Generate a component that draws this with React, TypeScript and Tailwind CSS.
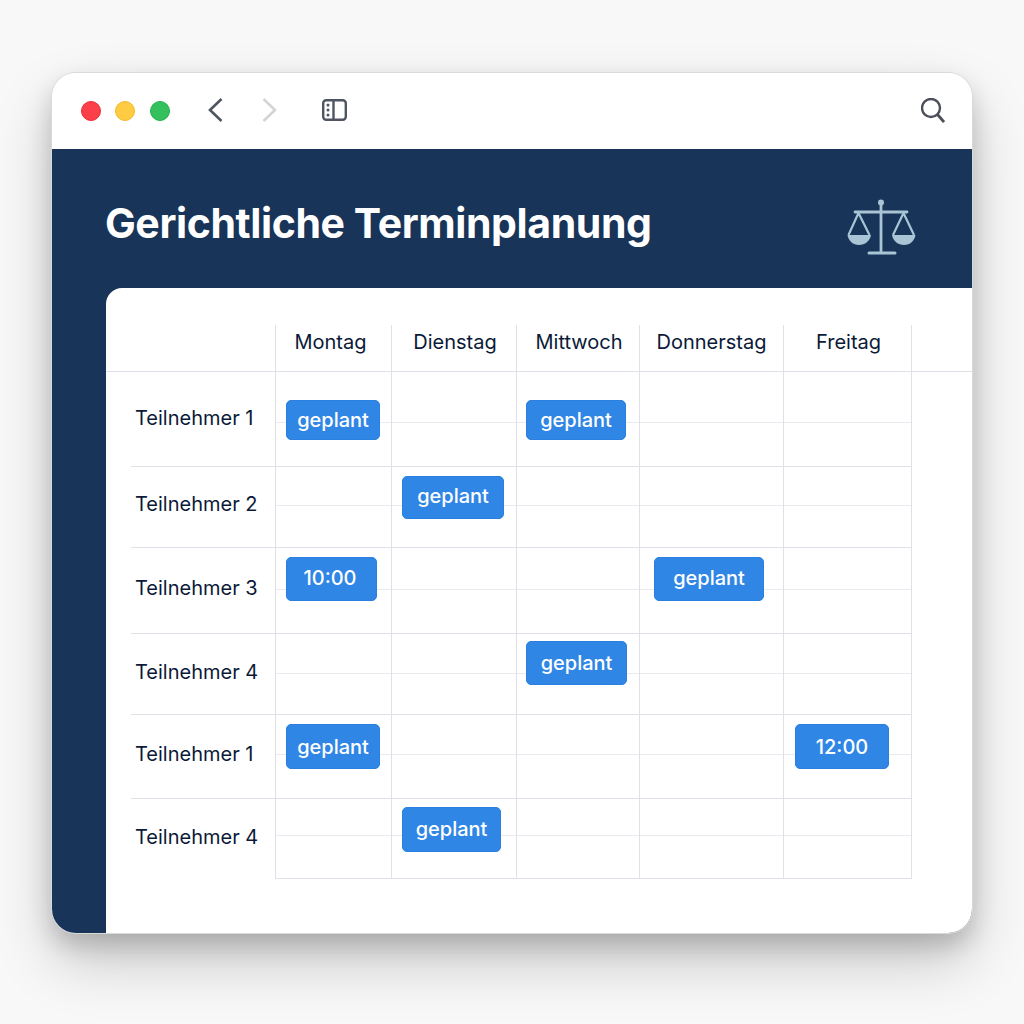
const days = [
  { name: 'Montag', width: 'w-[116px]', pad: 'pr-[6px]' },
  { name: 'Dienstag', width: 'w-[125px]', pad: 'pl-[2px]' },
  { name: 'Mittwoch', width: 'w-[123px]', pad: 'pl-[2px]' },
  { name: 'Donnerstag', width: 'w-[144px]', pad: '' },
  { name: 'Freitag', width: 'w-[128px]', pad: 'pl-[2px]' },
];

const cellWidths = ['w-[117px] border-l -ml-px', 'w-[125px]', 'w-[123px]', 'w-[144px]', 'w-[128px]'];

type Badge = { text: string; box: string };

const rows: { label: string; height: string; labelPad: string; mid: string; cells: (Badge | null)[] }[] = [
  {
    label: 'Teilnehmer 1',
    height: 'h-[95px]',
    labelPad: 'pb-[2px]',
    mid: 'top-[50px]',
    cells: [
      { text: 'geplant', box: 'w-[94px] h-[40px] ml-[10px] mt-[28px]' },
      null,
      { text: 'geplant', box: 'w-[100px] h-[40px] ml-[9px] mt-[28px]' },
      null,
      null,
    ],
  },
  {
    label: 'Teilnehmer 2',
    height: 'h-[81px]',
    labelPad: 'pb-[7px]',
    mid: 'top-[38px]',
    cells: [null, { text: 'geplant', box: 'w-[102px] h-[43px] ml-[10px] mt-[9px] pb-[3px]' }, null, null, null],
  },
  {
    label: 'Teilnehmer 3',
    height: 'h-[86px]',
    labelPad: 'pb-[5px]',
    mid: 'top-[41px]',
    cells: [
      { text: '10:00', box: 'w-[91px] h-[44px] ml-[10px] mt-[9px] pb-[2px] pr-[3px]' },
      null,
      null,
      { text: 'geplant', box: 'w-[110px] h-[44px] ml-[14px] mt-[9px] pb-[2px]' },
      null,
    ],
  },
  {
    label: 'Teilnehmer 4',
    height: 'h-[81px]',
    labelPad: 'pb-[5px]',
    mid: 'top-[39px]',
    cells: [null, null, { text: 'geplant', box: 'w-[101px] h-[44px] ml-[9px] mt-[7px]' }, null, null],
  },
  {
    label: 'Teilnehmer 1',
    height: 'h-[84px]',
    labelPad: 'pb-[6px]',
    mid: 'top-[39px]',
    cells: [
      { text: 'geplant', box: 'w-[94px] h-[45px] ml-[10px] mt-[9px]' },
      null,
      null,
      null,
      { text: '12:00', box: 'w-[94px] h-[45px] ml-[11px] mt-[9px]' },
    ],
  },
  {
    label: 'Teilnehmer 4',
    height: 'h-[80px]',
    labelPad: 'pb-[4px]',
    mid: 'top-[36px]',
    cells: [null, { text: 'geplant', box: 'w-[99px] h-[45px] ml-[10px] mt-[8px] pb-[2px]' }, null, null, null],
  },
];

function Scales() {
  return (
    <svg width="69" height="56" viewBox="0 0 69 56" fill="none" stroke="#a9c4d4" strokeWidth="2.2">
      <circle cx="34" cy="3.5" r="3" fill="#a9c4d4" stroke="none" />
      <path d="M34 4V53" strokeWidth="2.8" />
      <path d="M22 54H48" strokeWidth="3" strokeLinecap="round" />
      <path d="M8 13H60" strokeWidth="2.8" strokeLinecap="round" />
      <path d="M11.5 14L1.5 36M11.5 14L22.5 36M56.5 14L46 36M56.5 14L67 36" />
      <path d="M0.5 36H24C23 42 18 46 12 46C6 46 1.5 42 0.5 36Z" fill="#a9c4d4" stroke="none" />
      <path d="M45 36H68.5C67.5 42 63 46 57 46C51 46 46 42 45 36Z" fill="#a9c4d4" stroke="none" />
    </svg>
  );
}

export default function App() {
  return (
    <div className="h-[1024px] bg-[#f8f8f8] flex justify-center pt-[73px] font-['Inter',sans-serif]">
      <div className="w-[920px] h-[860px] rounded-[24px] overflow-hidden bg-white flex flex-col shadow-[0_0_0_1px_#dadada,0_12px_24px_rgba(0,0,0,0.18),0_28px_60px_rgba(0,0,0,0.2)]">
        {/* Browser toolbar */}
        <div className="h-[76px] shrink-0 flex items-center pl-[29px] pr-[27px] bg-white">
          <div className="w-[20px] h-[20px] rounded-full bg-[#fb4049] border border-[#ee2a35]" />
          <div className="w-[20px] h-[20px] rounded-full bg-[#fecb42] border border-[#f5b92a] ml-[14px]" />
          <div className="w-[20px] h-[20px] rounded-full bg-[#34c05c] border border-[#22b24b] ml-[15px]" />
          <svg width="16" height="24" viewBox="0 0 16 24" fill="none" stroke="#4f5560" strokeWidth="2.6" className="ml-[37px] mb-[2px]">
            <path d="M14.5 1L3 12L14.5 23" />
          </svg>
          <svg width="16" height="24" viewBox="0 0 16 24" fill="none" stroke="#d4d4d4" strokeWidth="2.6" className="ml-[38px] mb-[2px]">
            <path d="M2.5 1L14 12L2.5 23" />
          </svg>
          <svg width="25" height="22" viewBox="0 0 25 22" fill="none" className="ml-[45px] mb-[2px]">
            <rect x="1.2" y="1.2" width="22.6" height="19.6" rx="3" stroke="#4f5560" strokeWidth="2.4" />
            <path d="M11.5 1V21" stroke="#4f5560" strokeWidth="2.4" />
            <circle cx="6" cy="6" r="1.5" fill="#4f5560" />
            <circle cx="6" cy="11" r="1.5" fill="#4f5560" />
            <circle cx="6" cy="16" r="1.5" fill="#4f5560" />
          </svg>
          <svg width="24" height="25" viewBox="0 0 24 25" fill="none" stroke="#4a4f59" strokeWidth="2.4" className="ml-auto mb-[2px]">
            <circle cx="10" cy="10" r="9" />
            <path d="M16.5 16.5L23 24" strokeWidth="2.8" />
          </svg>
        </div>

        {/* Navy area */}
        <div className="flex-1 bg-[#183458] flex flex-col min-h-0">
          <div className="h-[139px] shrink-0 flex items-center pl-[53px] pr-[56px] justify-between">
            <h1 className="text-[41px] font-bold text-white leading-none tracking-[-0.4px] pt-[10px]">
              Gerichtliche Terminplanung
            </h1>
            <div className="pt-[17px]">
              <Scales />
            </div>
          </div>

          {/* Schedule card */}
          <div className="flex-1 ml-[54px] bg-white rounded-tl-[16px] pt-[37px] text-[#0b1a38] text-[20px]">
            <div className="flex h-[47px] border-b border-[#dfe1e9]">
              <div className="w-[170px] shrink-0 border-r border-[#dfe1e9]" />
              {days.map((d) => (
                <div
                  key={d.name}
                  className={`${d.width} ${d.pad} shrink-0 border-r border-[#dfe1e9] flex items-center justify-center pb-[12px]`}
                >
                  {d.name}
                </div>
              ))}
            </div>

            {rows.map((row, i) => (
              <div key={i} className={`flex ${row.height}`}>
                <div
                  className={`w-[145px] ml-[25px] shrink-0 pl-[4px] flex items-center whitespace-nowrap border-[#dfe1e9] ${
                    i < rows.length - 1 ? 'border-b' : ''
                  } ${row.labelPad}`}
                >
                  {row.label}
                </div>
                {row.cells.map((cell, j) => (
                  <div
                    key={j}
                    className={`relative ${cellWidths[j]} shrink-0 border-b border-r border-[#dfe1e9]`}
                  >
                    <div className={`absolute left-0 right-0 border-t border-[#e8eaef] ${row.mid}`} />
                    {cell && (
                      <div
                        className={`relative flex items-center justify-center rounded-[5px] bg-[#2f86e5] border border-[#2a7fe0] text-white font-medium text-[20px] ${cell.box}`}
                      >
                        {cell.text}
                      </div>
                    )}
                  </div>
                ))}
              </div>
            ))}
          </div>
        </div>
      </div>
    </div>
  );
}
